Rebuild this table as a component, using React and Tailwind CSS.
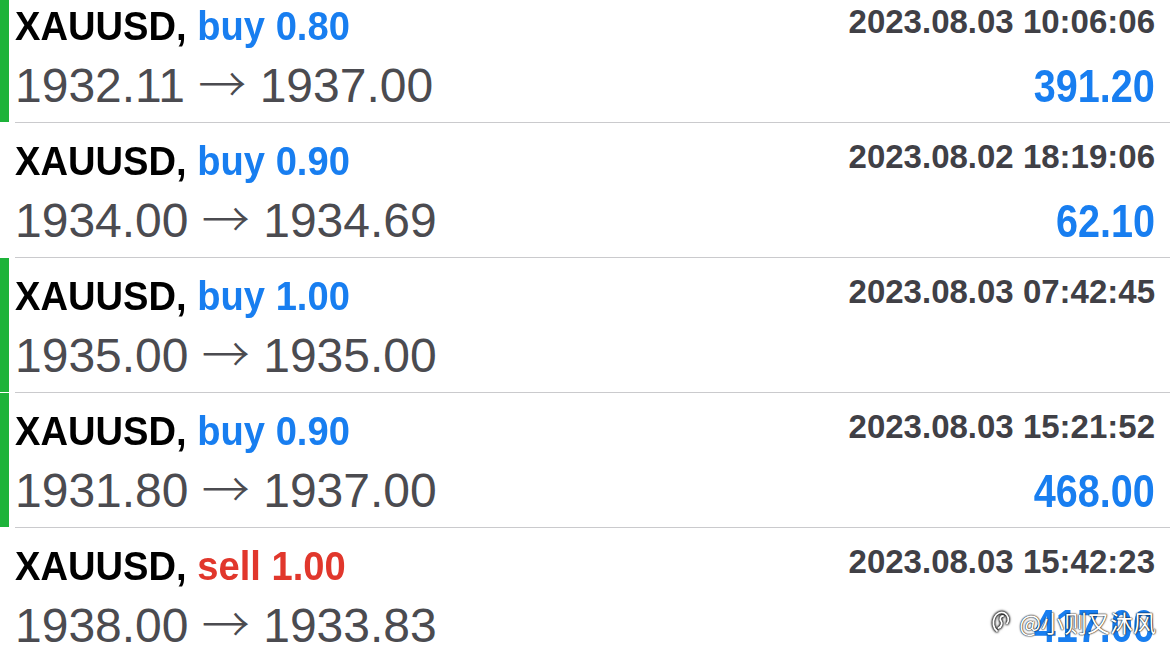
const trades = [
  { side: "buy", lots: "0.80", open: "1932.11", close: "1937.00", time: "2023.08.03 10:06:06", profit: "391.20", bar: true },
  { side: "buy", lots: "0.90", open: "1934.00", close: "1934.69", time: "2023.08.02 18:19:06", profit: "62.10", bar: false },
  { side: "buy", lots: "1.00", open: "1935.00", close: "1935.00", time: "2023.08.03 07:42:45", profit: "", bar: true },
  { side: "buy", lots: "0.90", open: "1931.80", close: "1937.00", time: "2023.08.03 15:21:52", profit: "468.00", bar: true },
  { side: "sell", lots: "1.00", open: "1938.00", close: "1933.83", time: "2023.08.03 15:42:23", profit: "417.00", bar: false },
]

const TradeRow = ({ trade }) => (
  <div className="flex h-[135px]">
    <div className={`w-[9px] shrink-0 mb-px ${trade.bar ? "bg-[#1db33a]" : ""}`} />
    <div className="ml-[6px] flex-1 min-w-0 border-b border-[#cacacd] pr-[15px] flex flex-col">
      <div className="pt-[15px] flex justify-between items-start">
        <span className="inline-block origin-left scale-x-[0.93] whitespace-nowrap text-[41px] leading-[46px] font-bold text-black">
          XAUUSD,{" "}
          <span className={trade.side === "buy" ? "text-[#187ef0]" : "text-[#e1372c]"}>
            {trade.side} {trade.lots}
          </span>
        </span>
        <span className="whitespace-nowrap text-[33px] leading-[38px] font-bold text-[#404046]">
          {trade.time}
        </span>
      </div>
      <div className="mt-[9px] flex justify-between items-baseline">
        <span className="whitespace-nowrap text-[48px] leading-[56px] text-[#4b4b50]">
          {trade.open}{" "}
          <span className="font-['Noto_Sans_CJK_SC',sans-serif] font-light leading-[0px]">→</span>{" "}
          {trade.close}
        </span>
        {trade.profit && (
          <span className="inline-block origin-right scale-x-[0.86] text-[46px] leading-[56px] font-bold text-[#187ef0]">
            {trade.profit}
          </span>
        )}
      </div>
    </div>
  </div>
)

const Watermark = () => (
  <div className="absolute right-[14px] bottom-[26px] flex items-center gap-[8px] text-white [text-shadow:0_0_2px_#000,0_0_1px_#000]">
    <svg width="20" height="24" viewBox="0 0 20 24" fill="none" className="[filter:drop-shadow(0_0_1px_#000)_drop-shadow(0_0_1px_#000)]">
      <path d="M6 21 C2 18 1.5 12 3.5 7.5 C5.5 3 10 1.5 13.5 3 C17.5 5 18.5 10 16 13.5" stroke="#fff" strokeWidth="1.8" strokeLinecap="round" />
      <path d="M12 6 C9.5 6 8.5 9 10 11 C11.5 13 10.5 17 7.5 18" stroke="#fff" strokeWidth="1.8" strokeLinecap="round" />
    </svg>
    <span className="text-[23px] leading-[28px] font-['Noto_Sans_CJK_SC','Noto_Sans',sans-serif]">@小则又沐风</span>
  </div>
)

export default function App() {
  return (
    <div className="relative h-[662px] w-[1170px] overflow-hidden bg-white font-['Liberation_Sans',Arial,sans-serif]">
      <div className="-mt-[12px]">
        {trades.map((trade, index) => (
          <TradeRow key={index} trade={trade} />
        ))}
      </div>
      <Watermark />
    </div>
  )
}
